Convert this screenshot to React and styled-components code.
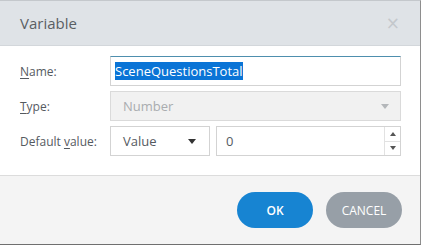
import React from 'react';
import styled, { createGlobalStyle } from 'styled-components';

const GlobalStyle = createGlobalStyle`
  html, body {
    margin: 0;
    padding: 0;
    background: #ffffff;
  }
  body {
    font-family: "Open Sans", "Noto Sans", "Liberation Sans", sans-serif;
  }
`;

const Dialog = styled.div`
  width: 421px;
  height: 245px;
  display: flex;
  flex-direction: column;
  border-top: 1px solid #c4c8cc;
  border-right: 1px solid #8e8e8e;
  border-bottom: 1px solid #6f6f6f;
  box-sizing: border-box;
  background: #fff;
`;

const Header = styled.div`
  height: 44px;
  display: flex;
  align-items: center;
  justify-content: space-between;
  padding: 0 20px 0 20px;
  background: #dfe3e7;
  border-bottom: 1px solid #d3d7db;
`;

const Title = styled.div`
  font-size: 15px;
  color: #5a5f64;
`;

const Close = styled.div`
  font-size: 17px;
  color: #c4c8cc;
  line-height: 1;
  font-family: "DejaVu Sans", sans-serif;
`;

const Body = styled.div`
  display: flex;
  flex-direction: column;
  gap: 5px;
  padding: 10px 19px 0 20px;
  height: 119px;
  border-bottom: 1px solid #dcdcdc;
`;

const Row = styled.div`
  display: flex;
  align-items: center;
  height: 30px;
  gap: 6px;
`;

const Label = styled.label`
  width: 84px;
  flex-shrink: 0;
  font-size: 12px;
  color: #555a5f;
  u {
    text-decoration: underline;
    text-underline-offset: 2px;
  }
`;

const Field = styled.div`
  flex: ${(p) => (p.$width ? '0 0 auto' : '1')};
  width: ${(p) => (p.$width ? `${p.$width}px` : 'auto')};
  height: 30px;
  box-sizing: border-box;
  display: flex;
  align-items: center;
  justify-content: space-between;
  padding: 0 0 0 ${(p) => (p.$pad || 4)}px;
  border: 1px solid ${(p) => (p.$disabled ? '#dadada' : '#d3d3d3')};
  border-top-color: ${(p) => (p.$focus ? '#4e8fae' : p.$disabled ? '#dadada' : '#d3d3d3')};
  background: ${(p) => (p.$disabled ? '#f1f1f1' : '#fff')};
  font-size: 13px;
  color: ${(p) => (p.$disabled ? '#a9acaf' : '#555a5f')};
`;

const Selected = styled.span`
  background: #0a74d6;
  color: #fff;
  padding: 1px 0;
  line-height: 16px;
`;

const Caret = styled.span`
  width: 0;
  height: 0;
  margin-right: ${(p) => p.$mr || 10}px;
  border-left: 4px solid transparent;
  border-right: 4px solid transparent;
  border-top: 5px solid ${(p) => (p.$light ? '#b4b7ba' : '#333')};
`;

const Spinner = styled.div`
  width: 15px;
  height: 28px;
  display: flex;
  flex-direction: column;
  border-left: 1px solid #e2e2e2;
`;

const SpinBtn = styled.div`
  flex: 1;
  display: flex;
  align-items: center;
  justify-content: center;
  & + & {
    border-top: 1px solid #e2e2e2;
  }
  span {
    width: 0;
    height: 0;
    border-left: 3px solid transparent;
    border-right: 3px solid transparent;
    ${(p) => (p.$up ? 'border-bottom: 4px solid #555;' : 'border-top: 4px solid #555;')}
  }
`;

const Footer = styled.div`
  flex: 1;
  display: flex;
  align-items: center;
  justify-content: flex-end;
  gap: 13px;
  padding: 0 18px 0 0;
  background: #f4f4f4;
`;

const Button = styled.button`
  width: 76px;
  height: 36px;
  border: none;
  border-radius: 18px;
  font-family: "Open Sans", "Noto Sans", sans-serif;
  font-size: 12px;
  font-weight: ${(p) => (p.$primary ? 600 : 400)};
  color: #fff;
  background: ${(p) => (p.$primary ? '#1784d2' : '#979fa7')};
  cursor: pointer;
`;

export default function App() {
  return (
    <>
      <GlobalStyle />
      <Dialog>
        <Header>
          <Title>Variable</Title>
          <Close>×</Close>
        </Header>
        <Body>
          <Row>
            <Label><u>N</u>ame:</Label>
            <Field $focus>
              <Selected>SceneQuestionsTotal</Selected>
            </Field>
          </Row>
          <Row>
            <Label><u>T</u>ype:</Label>
            <Field $disabled $pad={12}>
              Number
              <Caret $light $mr={11} />
            </Field>
          </Row>
          <Row>
            <Label>Default <u>v</u>alue:</Label>
            <Field $width={100} $pad={12}>
              Value
              <Caret $mr={13} />
            </Field>
            <Field $pad={9}>
              0
              <Spinner>
                <SpinBtn $up><span /></SpinBtn>
                <SpinBtn><span /></SpinBtn>
              </Spinner>
            </Field>
          </Row>
        </Body>
        <Footer>
          <Button $primary>OK</Button>
          <Button>CANCEL</Button>
        </Footer>
      </Dialog>
    </>
  );
}
